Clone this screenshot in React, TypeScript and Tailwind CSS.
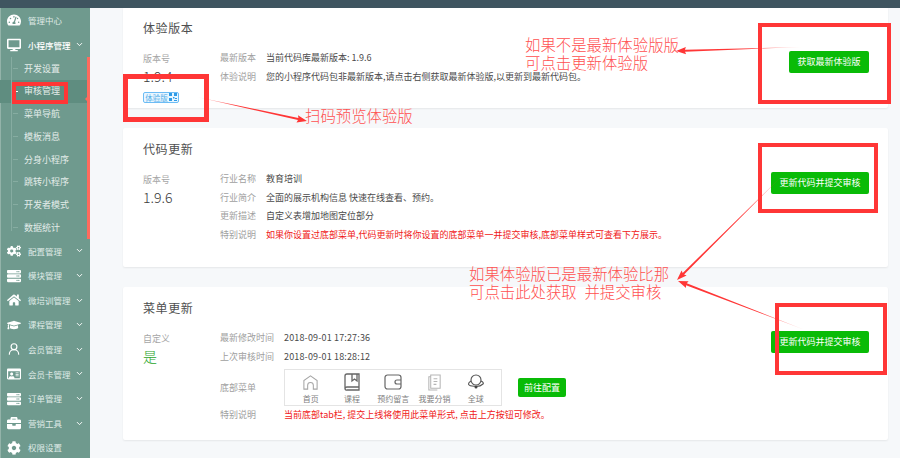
import React from "react";
import { ChevronDown } from "lucide-react";
import {
  FaTachometerAlt, FaDesktop, FaCogs, FaServer, FaHome, FaGraduationCap,
  FaRegIdCard, FaBriefcase, FaCog,
} from "react-icons/fa";
import { LuUserRound } from "react-icons/lu";

const subItems = ["开发设置", "审核管理", "菜单导航", "模板消息", "分身小程序", "跳转小程序", "开发者模式", "数据统计"];
const lowerItems: [React.ReactNode, string][] = [
  [<FaCogs />, "配置管理"],
  [<FaServer />, "模块管理"],
  [<FaHome />, "微培训管理"],
  [<FaGraduationCap />, "课程管理"],
  [<LuUserRound />, "会员管理"],
  [<FaRegIdCard />, "会员卡管理"],
  [<FaServer />, "订单管理"],
  [<FaBriefcase />, "营销工具"],
];

function NavRow({ icon, label, chevron = true, strong = false }: { icon: React.ReactNode; label: string; chevron?: boolean; strong?: boolean }) {
  return (
    <div className={`flex h-[24.6px] items-center pl-[7px] ${strong ? "text-white" : "text-[#dfeae6]"}`}>
      <span className="flex w-[21px] shrink-0 text-[14px] text-white">{icon}</span>
      <span className={`w-[46px] shrink-0 whitespace-nowrap text-[8.500px] ${strong ? "font-medium" : ""}`}>{label}</span>
      {chevron && <ChevronDown size={9} strokeWidth={2.5} className="ml-[1px] text-white" />}
    </div>
  );
}

function Sidebar() {
  return (
    <aside className="relative w-[90px] shrink-0 bg-[#6f9a8e] shadow-[inset_1px_0_0_#93b3a9]">
      <NavRow icon={<FaTachometerAlt />} label="管理中心" chevron={false} />
      <NavRow icon={<FaDesktop />} label="小程序管理" strong />
      <div className="relative border-r-[3px] border-[#ff6b5e]">
        <div className="absolute bottom-[8px] left-[11px] top-0 w-px bg-[#86aca1]" />
        {subItems.map((s, i) => (
          <div key={s} className={`flex h-[22.7px] items-center pl-[13px] text-[9px] text-[#e3ece9] ${i === 1 ? "bg-[#5f8d80]" : ""}`}>
            <span className={`mr-[6px] h-px w-[5px] ${i === 1 ? "bg-white" : "bg-[#86aca1]"}`} />
            {s}
          </div>
        ))}
      </div>
      <div className="absolute left-[85px] top-[87px] size-0 border-y-[4px] border-r-[4px] border-y-transparent border-r-[#ff6b5e]" />
      {lowerItems.map(([ic, l]) => <NavRow key={l} icon={ic} label={l} />)}
      <NavRow icon={<FaCog />} label="权限设置" chevron={false} />
    </aside>
  );
}

function Row({ label, w, children, red = false, wide = false }: { label: string; w: string; children: React.ReactNode; red?: boolean; wide?: boolean }) {
  return (
    <div className="flex h-[18.6px] items-center whitespace-nowrap text-[9px]">
      <span className={`${w} shrink-0 text-[#a0a0a0]`}>{label}</span>
      <span className={`${red ? "text-[#f01818]" : "text-[#4a4a4a]"} ${wide ? "tracking-[0.16px]" : ""}`}>{children}</span>
    </div>
  );
}

function GreenBtn({ children, w }: { children: React.ReactNode; w: string }) {
  return <div className={`${w} flex h-[22px] shrink-0 items-center justify-center rounded-[2px] bg-[#09bb07] text-[9px] text-white`}>{children}</div>;
}

function Card({ title, h, left, children, btn }: { title: string; h: string; left: React.ReactNode; children: React.ReactNode; btn: React.ReactNode }) {
  return (
    <section className={`${h} flex shrink-0 justify-between rounded-[2px] bg-white pl-[20px] pr-[19px] shadow-[0_1px_2px_rgba(0,0,0,0.07)]`}>
      <div>
        <h2 className="h-[29px] pt-[13px] text-[12px] leading-[16px] tracking-[0.6px] text-[#4f4f4f]">{title}</h2>
        <div className="mt-[12.7px] flex">
          <div className="w-[77px] shrink-0 pt-[3.3px]">{left}</div>
          <div>{children}</div>
        </div>
      </div>
      <div className="pt-[44px]">{btn}</div>
    </section>
  );
}

function Version({ label, value, green = false }: { label: string; value: string; green?: boolean }) {
  return (
    <>
      <div className="h-[14px] text-[9px] leading-[14px] text-[#a6a6a6]">{label}</div>
      <div className={`h-[20px] text-[14px] font-light leading-[20px] ${green ? "text-[#2aa52a]" : "text-[#3a3a3a]"}`}>{value}</div>
    </>
  );
}

const stroke = { fill: "none", stroke: "#7d7d7d", strokeWidth: 1.1 };
const tabs: [React.ReactNode, string][] = [
  [<svg viewBox="0 0 18 18" className="size-[17px]" {...stroke}><path d="M2 16V7l7-5 7 5v9h-4v-4a3 3 0 0 0-6 0v4z" stroke="#a5a5a5" /></svg>, "首页"],
  [<svg viewBox="0 0 18 18" className="size-[18px]" {...stroke}><path d="M2 3a2 2 0 0 1 2-2h12v13H4a2 2 0 0 0-2 2zM2 16a1.5 1.5 0 0 0 2 1h12v-3M9 1v7l2.500-2 2.500 2V1" strokeWidth={1.3} stroke="#666" /></svg>, "课程"],
  [<svg viewBox="0 0 18 18" className="size-[18px]" {...stroke}><rect x="1" y="2" width="16" height="14" rx="2.500" stroke="#666" strokeWidth={1.2} /><path d="M17 7h-4a2 2 0 0 0 0 4h4" stroke="#666" strokeWidth={1.2} /></svg>, "预约留言"],
  [<svg viewBox="0 0 18 18" className="size-[17px]" {...stroke}><path d="M5 1h10v14H5zM5 3H3v14h9M8 5h4M8 8h4M8 11h3" stroke="#b5b5b5" /></svg>, "我要分销"],
  [<svg viewBox="0 0 18 18" className="size-[18px]" {...stroke}><circle cx="9" cy="7" r="5" stroke="#555" /><path d="M4 8c-3 2-4 4 1 5s9 0 11-2c1-1 0-2-2-3" stroke="#555" /><circle cx="9" cy="14" r="1.500" fill="#444" stroke="none" /></svg>, "全球"],
];

function TabBar() {
  return (
    <div className="flex h-[37px] w-[218px] border border-[#e4e4e4] pl-[5px]">
      {tabs.map(([ic, l]) => (
        <div key={l} className="flex w-[41.3px] shrink-0 flex-col items-center pt-[3px]">
          <div className="flex h-[19px] items-center">{ic}</div>
          <div className="mt-[1px] whitespace-nowrap text-[8px] leading-[11px] text-[#808080]">{l}</div>
        </div>
      ))}
    </div>
  );
}

function arrow(x1: number, y1: number, x2: number, y2: number) {
  const d = Math.hypot(x2 - x1, y2 - y1);
  const ux = (x2 - x1) / d, uy = (y2 - y1) / d;
  const nx = -uy, ny = ux;
  const nk = [x2 - ux * 9, y2 - uy * 9];
  const pts = [
    [x1, y1],
    [nk[0] + nx * 1, nk[1] + ny * 1],
    [nk[0] + nx * 3.6 - ux, nk[1] + ny * 3.6 - uy],
    [x2, y2],
    [nk[0] - nx * 3.6 - ux, nk[1] - ny * 3.6 - uy],
    [nk[0] - nx * 1, nk[1] - ny * 1],
  ];
  return pts.map((p) => p.join(",")).join(" ");
}

const arrows = [
  { id: "a1", c: [802, 47, 676, 51] },
  { id: "a2", c: [197, 97, 307, 121] },
  { id: "a3", c: [788, 170, 677, 280] },
  { id: "a4", c: [805, 330, 678, 281] },
];

function Annotations() {
  const note = "absolute whitespace-pre font-light text-[15.4px] leading-[18px] text-[#ff5050] font-['Liberation_Serif','Noto_Sans_CJK_SC',serif]";
  const box = "absolute border-[4px] border-[#ff3636]";
  return (
    <>
      <div className={`${box} left-[123px] top-[74px] h-[48px] w-[86px] border-[5px]`} />
      <div className={`${box} left-[12px] top-[82px] h-[22px] w-[56px]`} />
      <div className={`${box} left-[758px] top-[23px] h-[81px] w-[133px]`} />
      <div className={`${box} left-[758px] top-[143px] h-[70px] w-[120px]`} />
      <div className={`${box} left-[775px] top-[303px] h-[72px] w-[112px]`} />
      <svg className="pointer-events-none absolute left-0 top-0" width="900" height="458">
        <defs>
          {arrows.map(({ id, c }) => (
            <linearGradient key={id} id={id} gradientUnits="userSpaceOnUse" x1={c[0]} y1={c[1]} x2={c[2]} y2={c[3]}>
              <stop offset="0" stopColor="#ff3636" stopOpacity="0.15" />
              <stop offset="0.35" stopColor="#ff3636" stopOpacity="1" />
            </linearGradient>
          ))}
        </defs>
        {arrows.map(({ id, c }) => (
          <polygon key={id} points={arrow(c[0], c[1], c[2], c[3])} fill={`url(#${id})`} />
        ))}
      </svg>
      <div className={`${note} left-[525px] top-[37px]`}>{"如果不是最新体验版版\n可点击更新体验版"}</div>
      <div className={`${note} left-[305px] top-[108px]`}>扫码预览体验版</div>
      <div className={`${note} left-[469px] top-[266px]`}>{"如果体验版已是最新体验比那\n可点击此处获取  并提交审核"}</div>
    </>
  );
}

function QrTag() {
  return (
    <div className="mt-[6px] flex h-[11px] w-[36px] items-center justify-center gap-[1px] rounded-[2px] border border-[#6cbcf5] bg-[#e9f6ff] text-[7.500px] leading-none text-[#55aee8]">
      体验版
      <svg viewBox="0 0 8 8" className="size-[8px]" fill="#2f9be6"><path d="M0 0h3v3H0zM5 0h3v3H5zM0 5h3v3H0zM4 4h1.500v1.500H4zM6 5h2v1H6zM5 7h3v1H5z" /></svg>
    </div>
  );
}

export default function App() {
  return (
    <div className="relative flex h-[458px] w-[900px] flex-col overflow-hidden bg-[#f6f8fa] font-['Noto_Sans_CJK_SC','Noto_Sans',sans-serif]">
      <header className="relative z-10 h-[8px] shrink-0 bg-[#3f5560]" />
      <div className="flex min-h-0 flex-1">
        <Sidebar />
        <main className="-mt-[1px] flex flex-1 flex-col gap-[20px] pl-[33px] pr-[12px]">
          <Card
            title="体验版本"
            h="h-[101px]"
            left={<><Version label="版本号" value="1.9.4" /><QrTag /></>}
            btn={<GreenBtn w="w-[80px]">获取最新体验版</GreenBtn>}
          >
            <Row label="最新版本" w="w-[46px]">当前代码库最新版本: 1.9.6</Row>
            <Row label="体验说明" w="w-[46px]">您的小程序代码包非最新版本,请点击右侧获取最新体验版,以更新到最新代码包。</Row>
          </Card>
          <Card
            title="代码更新"
            h="h-[139px]"
            left={<Version label="版本号" value="1.9.6" />}
            btn={<GreenBtn w="w-[98px]">更新代码并提交审核</GreenBtn>}
          >
            <Row label="行业名称" w="w-[46px]">教育培训</Row>
            <Row label="行业简介" w="w-[46px]">全面的展示机构信息 快速在线查看、预约。</Row>
            <Row label="更新描述" w="w-[46px]">自定义表增加地图定位部分</Row>
            <Row label="特别说明" w="w-[46px]" red>如果你设置过底部菜单,代码更新时将你设置的底部菜单一并提交审核,底部菜单样式可查看下方展示。</Row>
          </Card>
          <Card
            title="菜单更新"
            h="h-[153px]"
            left={<Version label="自定义" value="是" green />}
            btn={<GreenBtn w="w-[98px]">更新代码并提交审核</GreenBtn>}
          >
            <Row label="最新修改时间" w="w-[64px]" wide>2018-09-01 17:27:36</Row>
            <Row label="上次审核时间" w="w-[64px]" wide>2018-09-01 18:28:12</Row>
            <div className="mt-[3px] flex items-center whitespace-nowrap text-[9px]">
              <span className="w-[64px] shrink-0 text-[#a0a0a0]">底部菜单</span>
              <TabBar />
              <div className="ml-[16px] flex h-[19px] w-[48px] items-center justify-center rounded-[2px] bg-[#09bb07] text-[9px] text-white">前往配置</div>
            </div>
            <Row label="特别说明" w="w-[64px]" red>当前底部tab栏, 提交上线将使用此菜单形式, 点击上方按钮可修改。</Row>
          </Card>
        </main>
      </div>
      <Annotations />
    </div>
  );
}
